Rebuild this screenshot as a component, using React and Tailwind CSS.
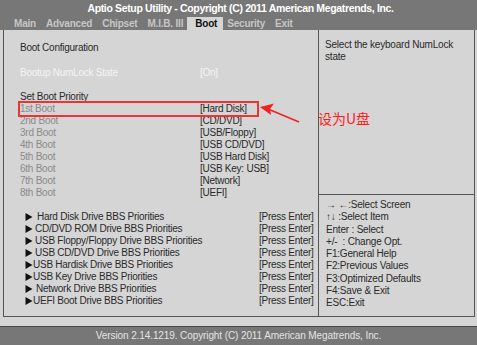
import React from 'react';

const bootOrder = [
  ['1st Boot', '[Hard Disk]'],
  ['2nd Boot', '[CD/DVD]'],
  ['3rd Boot', '[USB/Floppy]'],
  ['4th Boot', '[USB CD/DVD]'],
  ['5th Boot', '[USB Hard Disk]'],
  ['6th Boot', '[USB Key: USB]'],
  ['7th Boot', '[Network]'],
  ['8th Boot', '[UEFI]'],
];

const bbs = [
  ['Hard Disk Drive BBS Priorities', 'pl-[4px]'],
  ['CD/DVD ROM Drive BBS Priorities', 'pl-[2px]'],
  ['USB Floppy/Floppy Drive BBS Priorities', 'pl-[2px]'],
  ['USB CD/DVD Drive BBS Priorities', 'pl-[2px]'],
  ['USB Hardisk Drive BBS Priorities', 'pl-0'],
  ['USB Key Drive BBS Priorities', 'pl-0'],
  ['Network Drive BBS Priorities', 'pl-[3px]'],
  ['UEFI Boot Drive BBS Priorities', 'pl-0'],
];

const help = [
  '\u2192 \u2190:Select Screen',
  '\u2191\u2193 :Select Item',
  'Enter : Select',
  '+/-  : Change Opt.',
  'F1:General Help',
  'F2:Previous Values',
  'F3:Optimized Defaults',
  'F4:Save & Exit',
  'ESC:Exit',
];

const tabs = ['Main', 'Advanced', 'Chipset', 'M.I.B. III', 'Boot', 'Security', 'Exit'];

const Tri = () => (
  <svg width="8" height="12" viewBox="0 0 8 12" className="shrink-0">
    <path d="M0.5 2 L7.5 6 L0.5 10 Z" fill="#111" />
  </svg>
);

export default function App() {
  return (
    <div
      className="w-[477px] h-[345px] bg-[#d5d5d5] flex flex-col overflow-hidden relative"
      style={{ fontFamily: '"Liberation Sans", Arial, sans-serif' }}
    >
      {/* Header */}
      <div className="bg-[#777777] h-[30px] shrink-0 flex flex-col">
        <div className="h-[17px] text-center text-white font-bold text-[10.5px] leading-[17px] tracking-[-0.35px] pl-[4px]">
          Aptio Setup Utility - Copyright (C) 2011 American Megatrends, Inc.
        </div>
        <div className="flex pl-[14px] gap-[10px] h-[13px] items-end tracking-[-0.2px]">
          {tabs.map((t) =>
            t === 'Boot' ? (
              <div
                key={t}
                className="bg-[#d5d5d5] text-[#111] font-bold text-[10px] leading-[13px] pl-[8px] pr-[6px] -mx-[6px]"
              >
                {t}
              </div>
            ) : (
              <div key={t} className="text-[#c6c6c6] font-bold text-[10px] leading-[13px]">
                {t}
              </div>
            )
          )}
        </div>
      </div>

      {/* Body */}
      <div className="mx-[3px] mr-[2px] h-[287px] shrink-0 border-l border-r border-b border-[#555] flex">
        {/* Left panel */}
        <div className="w-[315px] border-r border-[#555] pl-[16px] pt-[12px] text-[10px] leading-[12px] tracking-[-0.25px] text-[#2a2a2a] relative">
          <div>Boot Configuration</div>
          <div className="flex mt-[13px]">
            <span className="w-[180px] text-[#f4f4f4]">Bootup NumLock State</span>
            <span className="text-[#f4f4f4]">[On]</span>
          </div>
          <div className="mt-[12px]">Set Boot Priority</div>
          {bootOrder.map(([k, v]) => (
            <div key={k} className="flex">
              <span className="w-[180px] text-[#8a8a8a]">{k}</span>
              <span>{v}</span>
            </div>
          ))}
          <div className="mt-[12px] pl-[5px]">
            {bbs.map(([t, pad]) => (
              <div key={t} className="flex">
                <span className="w-[234px] flex">
                  <Tri />
                  <span className={pad}>{t}</span>
                </span>
                <span>[Press Enter]</span>
              </div>
            ))}
          </div>

          {/* highlight box on 1st Boot */}
          <div className="absolute left-[14px] top-[71px] w-[241px] h-[16px] border-2 border-[#ee3333]"></div>
        </div>

        {/* Right panel */}
        <div className="flex-1 flex flex-col text-[10px] tracking-[-0.2px] text-[#2a2a2a]">
          <div className="h-[165px] border-b border-[#555] pl-[6px] pt-[9px] leading-[12px]">
            Select the keyboard NumLock
            <br />
            state
          </div>
          <div className="pl-[7px] pt-[4px] leading-[12.3px]">
            {help.map((h) => (
              <div key={h} className="whitespace-pre">{h}</div>
            ))}
          </div>
        </div>
      </div>

      {/* Footer */}
      <div className="h-[9px] shrink-0"></div>
      <div className="flex-1 bg-[#777777] border-t border-[#444] text-center text-[#e4e4e4] text-[10px] leading-[17px] tracking-[-0.1px]">
        Version 2.14.1219. Copyright (C) 2011 American Megatrends, Inc.
      </div>

      {/* Annotation */}
      <svg className="absolute left-[258px] top-[100px]" width="50" height="26" viewBox="0 0 50 26">
        <path d="M41 22 L10 9" stroke="#ee2222" strokeWidth="1.6" fill="none" />
        <path d="M2 7 L16 3.5 L12 9 L13 15 Z" fill="#ee2222" />
      </svg>
      <div
        className="absolute left-[318px] top-[109px] text-[14px] leading-[18px] text-[#ff1a1a]"
        style={{ fontFamily: '"Noto Sans CJK SC", sans-serif' }}
      >
        设为U盘
      </div>
    </div>
  );
}
